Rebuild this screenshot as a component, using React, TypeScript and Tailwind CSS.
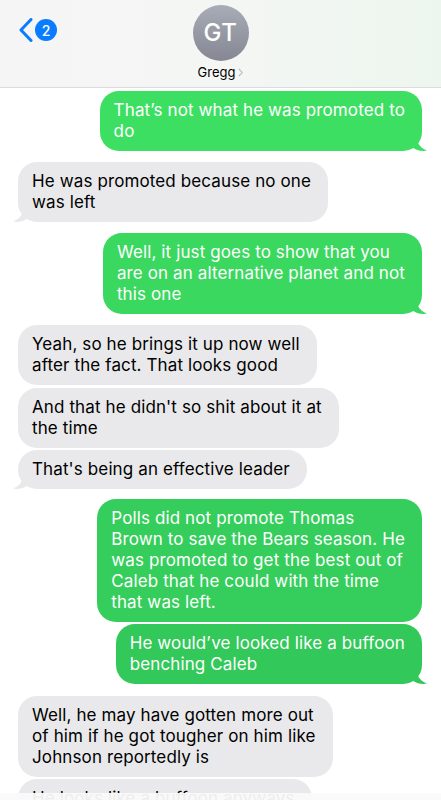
import React from "react";

type Msg = { from: "me" | "them"; lines: string[]; tail?: boolean; gap: number; color?: string };

// sent bubbles get a little darker further down the screen, like on iOS
const messages: Msg[] = [
  { from: "me", lines: ["That’s not what he was promoted to", "do"], tail: true, gap: 3, color: "#3ddf63" },
  { from: "them", lines: ["He was promoted because no one", "was left"], tail: true, gap: 11 },
  {
    from: "me",
    lines: ["Well, it just goes to show that you", "are on an alternative planet and not", "this one"],
    tail: true,
    gap: 11,
    color: "#3ad85f",
  },
  { from: "them", lines: ["Yeah, so he brings it up now well", "after the fact. That looks good"], gap: 11 },
  { from: "them", lines: ["And that he didn't so shit about it at", "the time"], gap: 3 },
  { from: "them", lines: ["That's being an effective leader"], tail: true, gap: 2 },
  {
    from: "me",
    lines: [
      "Polls did not promote Thomas",
      "Brown to save the Bears season. He",
      "was promoted to get the best out of",
      "Caleb that he could with the time",
      "that was left.",
    ],
    gap: 10,
    color: "#35ce5c",
  },
  { from: "me", lines: ["He would’ve looked like a buffoon", "benching Caleb"], tail: true, gap: 2, color: "#33c85a" },
  {
    from: "them",
    lines: ["Well, he may have gotten more out", "of him if he got tougher on him like", "Johnson reportedly is"],
    gap: 12,
  },
  { from: "them", lines: ["He looks like a buffoon anyways"], gap: 2 },
];

function Tail({ side, color }: { side: "left" | "right"; color: string }) {
  const right = side === "right";
  return (
    <svg
      width="17"
      height="20"
      viewBox="0 0 17 20"
      className={`absolute bottom-0 ${right ? "-right-[6px]" : "-left-[6px] -scale-x-100"}`}
    >
      <path d="M3 0 C5 10 8 16.5 16 19.6 C10 20.6 5 19.2 1 16 L0 0 Z" fill={color} />
    </svg>
  );
}

function Bubble({ m }: { m: Msg }) {
  const me = m.from === "me";
  const color = me ? m.color ?? "#36d35f" : "#e9e9eb";
  return (
    <div className={`flex ${me ? "justify-end pr-[19px]" : "justify-start pl-[18px]"}`} style={{ marginTop: m.gap }}>
      <div
        className={`relative rounded-[19px] py-[9px] pl-[14px] pr-[17px] text-[17px] leading-[21px] tracking-[0.12px] whitespace-nowrap ${
          me ? "text-white" : "text-black"
        }`}
        style={{ backgroundColor: color }}
      >
        {m.lines.map((l, i) => (
          <div key={i}>{l}</div>
        ))}
        {m.tail && <Tail side={me ? "right" : "left"} color={color} />}
      </div>
    </div>
  );
}

export default function App() {
  return (
    <div className="h-[800px] w-[441px] overflow-hidden bg-white relative" style={{ fontFamily: "Inter, 'Noto Sans', sans-serif" }}>
      <header className="h-[88px] border-b border-[#dcdcdc] bg-gradient-to-r from-[#f5f5f5] via-[#f4f6f4] to-[#edf6ee] flex">
        <div className="w-[100px] flex items-start pt-[18px] pl-[19px] gap-[2px]">
          <svg width="14" height="24" viewBox="0 0 14 24">
            <path d="M12 1.5 L2 12 L12 22.5" stroke="#0a7cff" strokeWidth="3" fill="none" strokeLinecap="round" strokeLinejoin="round" />
          </svg>
          <div className="mt-[1px] h-[22px] w-[22px] rounded-full bg-[#0a7cff] text-white text-[14px] font-medium flex items-center justify-center">
            2
          </div>
        </div>
        <div className="flex-1 flex flex-col items-center pt-[5px] pr-[100px]">
          <div className="h-[56px] w-[56px] rounded-full bg-gradient-to-b from-[#a8acb6] to-[#858892] flex items-center justify-center text-white text-[24px] font-medium tracking-[0.5px]">
            GT
          </div>
          <div className="mt-[3px] flex items-center gap-[3px] text-[13px] text-black leading-[16px]">
            <span>Gregg</span>
            <svg width="5" height="9" viewBox="0 0 5 9">
              <path d="M0.8 0.8 L4.2 4.5 L0.8 8.2" stroke="#b8b8bc" strokeWidth="1.1" fill="none" />
            </svg>
          </div>
        </div>
      </header>
      <div className="flex flex-col">
        {messages.map((m, i) => (
          <Bubble key={i} m={m} />
        ))}
      </div>
      <div className="absolute bottom-0 left-0 right-0 h-[7px] bg-[#fafafa]/95" />
    </div>
  );
}
